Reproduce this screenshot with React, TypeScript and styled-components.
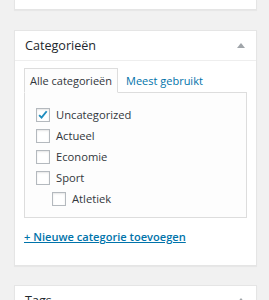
import styled, { createGlobalStyle } from "styled-components";

const GlobalStyle = createGlobalStyle`
  html, body {
    margin: 0;
    padding: 0;
    background: #f1f1f1;
    font-family: "Open Sans", "Liberation Sans", sans-serif;
    color: #32373c;
    overflow: hidden;
  }
`;

const categories = [
  { name: "Uncategorized", checked: true, child: false },
  { name: "Actueel", checked: false, child: false },
  { name: "Economie", checked: false, child: false },
  { name: "Sport", checked: false, child: false },
  { name: "Atletiek", checked: false, child: true },
];

const App = () => {
  return (
    <>
      <GlobalStyle />
      <Sidebar>
        <Stub />
        <Postbox>
          <Header>
            <Title>Categorieën</Title>
            <Toggle />
          </Header>
          <Inside>
            <Tabs>
              <Tab $active>Alle categorieën</Tab>
              <Tab>Meest gebruikt</Tab>
            </Tabs>
            <Panel>
              {categories.map((c) => (
                <Item key={c.name} $child={c.child}>
                  <Box>
                    {c.checked && (
                      <svg width="14" height="14" viewBox="0 0 14 14">
                        <path
                          d="M2.5 7.2 L5.3 10 L11.3 2.6"
                          fill="none"
                          stroke="#1e8cbe"
                          strokeWidth="2.2"
                        />
                      </svg>
                    )}
                  </Box>
                  {c.name}
                </Item>
              ))}
            </Panel>
            <AddLink href="#">+ Nieuwe categorie toevoegen</AddLink>
          </Inside>
        </Postbox>
        <Postbox>
          <Header>
            <Title>Tags</Title>
            <Toggle />
          </Header>
        </Postbox>
      </Sidebar>
    </>
  );
};

export default App;

const Sidebar = styled.div`
  display: flex;
  flex-direction: column;
  gap: 19px;
  padding: 0 12px 0 14px;
`;

const Stub = styled.div`
  height: 10px;
  background: #fff;
  border: 1px solid #e5e5e5;
  border-top: none;
  box-sizing: border-box;
  box-shadow: 0 1px 1px rgba(0, 0, 0, 0.04);
  margin-bottom: 1px;
`;

const Postbox = styled.div`
  background: #fff;
  border: 1px solid #e5e5e5;
  box-shadow: 0 1px 1px rgba(0, 0, 0, 0.04);
`;

const Header = styled.div`
  display: flex;
  align-items: center;
  justify-content: space-between;
  height: 29px;
  padding: 0 11px 0 10px;
  border-bottom: 1px solid #eee;
`;

const Title = styled.h2`
  margin: 0;
  font-size: 12.6px;
  font-weight: 400;
  color: #23282d;
`;

const Toggle = styled.span`
  width: 0;
  height: 0;
  border-left: 4px solid transparent;
  border-right: 4px solid transparent;
  border-bottom: 5px solid #a0a5aa;
`;

const Inside = styled.div`
  padding: 7px 9px 19px;
`;

const Tabs = styled.div`
  display: flex;
  gap: 2px;
  margin-bottom: -1px;
`;

const Tab = styled.div<{ $active?: boolean }>`
  height: 23px;
  line-height: 23px;
  padding: 0 5px;
  font-size: 11px;
  border: 1px solid ${(p) => (p.$active ? "#ddd" : "transparent")};
  border-bottom-color: ${(p) => (p.$active ? "#fdfdfd" : "transparent")};
  background: ${(p) => (p.$active ? "#fdfdfd" : "transparent")};
  color: ${(p) => (p.$active ? "#32373c" : "#0073aa")};
  position: relative;
  z-index: 1;
`;

const Panel = styled.div`
  background: #fdfdfd;
  border: 1px solid #ddd;
  padding: 11px 11px 8px;
  display: flex;
  flex-direction: column;
`;

const Item = styled.label<{ $child: boolean }>`
  display: flex;
  align-items: center;
  gap: 6px;
  height: 21px;
  font-size: 11.2px;
  color: #32373c;
  padding-left: ${(p) => (p.$child ? "16px" : "0")};
`;

const Box = styled.span`
  width: 14px;
  height: 14px;
  box-sizing: border-box;
  border: 1px solid #b4b9be;
  background: #fff;
  box-shadow: inset 0 1px 2px rgba(0, 0, 0, 0.1);
  display: flex;
  align-items: center;
  justify-content: center;
`;

const AddLink = styled.a`
  display: inline-block;
  margin-top: 11px;
  font-size: 11.1px;
  font-weight: 600;
  color: #0073aa;
  text-decoration: underline;
`;
